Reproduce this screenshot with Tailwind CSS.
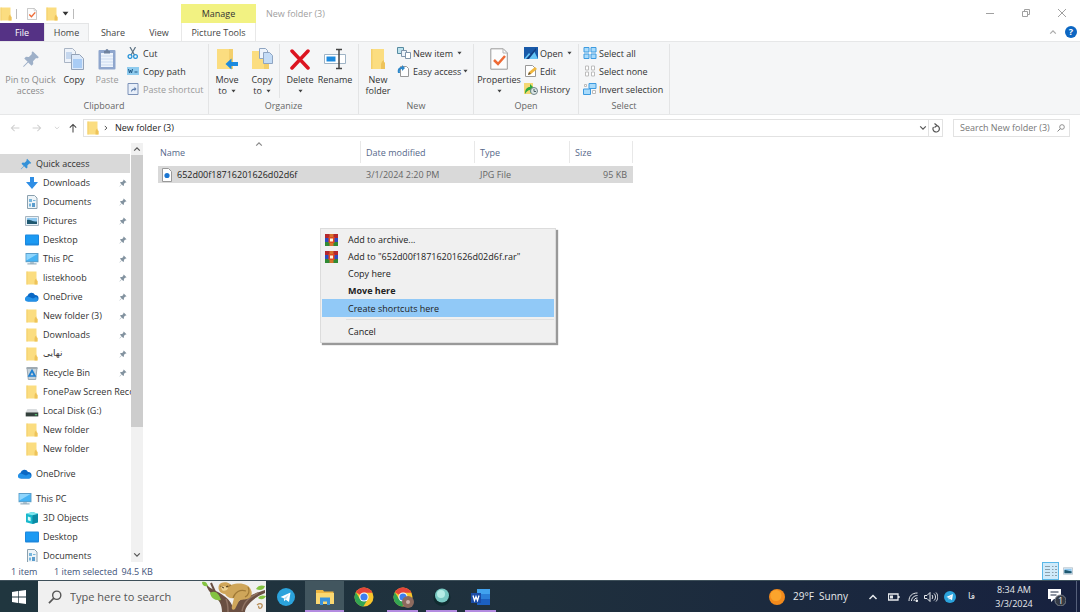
<!DOCTYPE html>
<html lang="en">
<head>
  <meta charset="UTF-8" />
  <meta name="viewport" content="width=device-width, initial-scale=1.0" />
  <title>New folder (3)</title>
  <script src="https://cdn.jsdelivr.net/npm/@tailwindcss/browser@4"></script>
</head>
<body class="relative h-screen flex flex-col overflow-hidden bg-white font-['Open_Sans','Noto_Sans',sans-serif] text-[9px] leading-[11px] text-[#333]">

  <!-- Shared icons -->
  <svg class="hidden">
    <symbol id="folder" viewBox="0 0 12 14"><path d="M.5.500h10v8.500l1 1v3.500H.5z" fill="#fbdd80"/><path d="M9 8.500 10.500 7.500v1.500l1 1v3.500H8.500v-3z" fill="#eec35a"/><path d="M.5.500h1v13h-1z" fill="#f3cf6c"/></symbol>
    <symbol id="pin" viewBox="0 0 16 16"><path d="M9.500 1 15 6.500l-1.500 1-1-.3-2.700 2.700.2 2.600-1.500 1.500-3-3L1.500 15 1 14.500 5 10.500l-3-3L3.500 6l2.600.2L8.800 3.500l-.3-1z"/></symbol>
    <symbol id="download" viewBox="0 0 12 12"><path d="M4 0h4v5h4L6 12 0 5h4z" fill="#2f8ee5"/></symbol>
    <symbol id="document" viewBox="0 0 12 14"><path d="M1.500.5h7l2.500 2.500v10.500h-9.500z" fill="#eef4f8" stroke="#8aa0ae"/><path d="M3 4h3v3H3zM7 5h2.500v1H7zM3 8.500h2v3H3z" fill="#78b6dc"/><path d="M6 8h3v4H6z" fill="#5a9ccc"/></symbol>
    <symbol id="picture" viewBox="0 0 14 10"><path d="M.5.5h13v9H.5z" fill="#e6f1f9" stroke="#a6b5c0"/><path d="M2 2h10v6H2z" fill="#8ec8f0"/><path d="M2 4c3-1 4 1.500 10 1.500V8H2z" fill="#1f5870"/></symbol>
    <symbol id="desktop" viewBox="0 0 14 11"><rect width="14" height="11" rx="1" fill="#1c87dd"/><path d="M1 1h12v8H1z" fill="#1b9af3"/></symbol>
    <symbol id="pc" viewBox="0 0 14 13"><path d="M0 0h14v10H0z" fill="#5f9dc5"/><path d="M1 1h12v8H1z" fill="#46b3f4"/><path d="M1 1h12L1 8z" fill="#8fd5fc"/><path d="M5 10h4v1h3v1.500H2V11h3z" fill="#9bb3c2"/></symbol>
    <symbol id="cloud" viewBox="0 0 14 9"><path d="M3 9a3 3 0 0 1-.5-5.800A4 4 0 0 1 10 2.500 3.300 3.300 0 0 1 11 9z" fill="#0a68c4"/><path d="M2 9a2.500 2.500 0 0 1 1-5l5 2 3-1.500A2.400 2.400 0 0 1 11.500 9z" fill="#2391e8"/></symbol>
    <symbol id="bin" viewBox="0 0 12 14"><path d="M1 2h10l-1.300 11.500H2.300z" fill="#c6d2da" stroke="#8b9aa5" stroke-width=".8"/><path d="M.5 1h11v2H.5z" fill="#9faab2"/><path d="M6 4.500 9 10H3z" fill="none" stroke="#1e7fd0" stroke-width="1.700"/></symbol>
    <symbol id="disk" viewBox="0 0 12 7"><path d="M2 0h8l1.500 3H.5z" fill="#d9dcde"/><path d="M.5 3h11v3.500H.5z" fill="#33403c"/><path d="M8.500 4.500h2v1h-2z" fill="#5fd07a"/></symbol>
    <symbol id="cube" viewBox="0 0 13 13"><path d="M0 2 7 0l6 2v9l-6 2-7-2z" fill="#18b8cc"/><path d="M7 3.500 13 2v9l-6 2z" fill="#0b8ba5"/><path d="M0 2l7 1.500L13 2 7 0z" fill="#7ee6ee"/><path d="M2 5l3 1v4l-3-1z" fill="#d6fbfc"/></symbol>
    <symbol id="rar" viewBox="0 0 13 12"><path d="M0 0h13v4H0z" fill="#b3272d"/><path d="M0 4h13v4H0z" fill="#2c4cc0"/><path d="M0 8h13v4H0z" fill="#2f8a34"/><path d="M4.500 0h4v12h-4z" fill="#d8722c"/><path d="M3.500 3h6v6h-6z" fill="#e04a22"/><path d="M5 4.500h3v3H5z" fill="#fff8dc"/></symbol>
    <symbol id="down" viewBox="0 0 6 4"><path d="M.5.5h5L3 3.700z"/></symbol>
    <symbol id="chevron" viewBox="0 0 10 6"><path d="m1.500 1 3.500 3.500L8.500 1" fill="none" stroke="currentColor" stroke-width="1.500"/></symbol>
    <symbol id="mag" viewBox="0 0 12 12"><circle cx="7.500" cy="4.500" r="3.500" fill="none" stroke="currentColor" stroke-width="1.200"/><path d="M5 7 .8 11.200" stroke="currentColor" stroke-width="1.400"/></symbol>
    <symbol id="arrow" viewBox="0 0 12 10"><path d="M11.500 5h-10M5.500 1l-4 4 4 4" fill="none" stroke="currentColor" stroke-width="1.300"/></symbol>
    <symbol id="check" viewBox="0 0 18 22"><path d="M.8.8h12.500l4 4v16.400H.8z" fill="#fdfdfd" stroke="#9a9a9a"/><path d="M13 1v4h4" fill="none" stroke="#b4b4b4"/><path d="m4 12 4 4 7-8" fill="none" stroke="#ee6a35" stroke-width="2.500"/></symbol>
    <symbol id="telegram" viewBox="0 0 18 18"><circle cx="9" cy="9" r="9" fill="#2ba3dc"/><path d="m3.500 9 10-4.500-1.500 9.500-3.300-2.300-1.500 1.600-.4-3z" fill="#fff"/><path d="m6.800 10.300 5-3.800-3.100 5.200" fill="#b9dff2"/></symbol>
    <symbol id="chrome" viewBox="0 0 20 20"><circle cx="10" cy="10" r="9.500" fill="#f9c52b"/><path d="M10 10 1.800 5.200A9.500 9.500 0 0 1 18.500 5.700H10z" fill="#e5453a"/><path d="M1.800 5.200A9.500 9.500 0 0 0 9.300 19.500l4.400-7.300L6 12z" fill="#33a553"/><circle cx="10" cy="10" r="4.600" fill="#fff"/><circle cx="10" cy="10" r="3.600" fill="#3f7fee"/></symbol>
  </svg>

  <!-- Title bar -->
  <header class="shrink-0">
    <div class="flex h-[23px] items-stretch">
      <div class="flex w-[181px] items-center gap-2 pt-1">
        <svg class="w-3 h-3.5"><use href="#folder"/></svg>
        <span class="-ml-1 mr-px w-px h-2.5 bg-[#bbb]"></span>
        <button aria-label="Properties"><svg class="w-3 h-3 block"><use href="#check"/></svg></button>
        <button aria-label="New folder"><svg class="w-3 h-3.5 block"><use href="#folder"/></svg></button>
        <button aria-label="Customize toolbar" class="-ml-1 flex items-center gap-1"><svg class="w-[7px] h-[5px] fill-[#333]"><use href="#down"/></svg><span class="w-px h-2.5 bg-[#bbb]"></span></button>
      </div>
      <div class="mt-1 w-[75px] bg-[#f2f282] flex items-center justify-center">Manage</div>
      <h1 class="flex items-center pt-1 pl-2.5 text-[#a0a0a0]">New folder (3)</h1>
      <div class="ml-auto flex items-center pt-0.5 text-[#a0a0a0]">
        <button aria-label="Minimize" class="w-9 flex justify-center"><svg class="w-2 h-2" viewBox="0 0 8 8"><path d="M0 4.500h8" stroke="currentColor"/></svg></button>
        <button aria-label="Restore" class="w-9 flex justify-center"><svg class="w-2.5 h-2.5" viewBox="0 0 10 10" fill="none" stroke="currentColor"><path d="M1.500 3.500h5v5h-5zM3.500 3.500v-2h5v5h-2"/></svg></button>
        <button aria-label="Close" class="w-9 flex justify-center"><svg class="w-2.5 h-2.5" viewBox="0 0 10 10"><path d="m1 1 8 8M9 1 1 9" stroke="currentColor"/></svg></button>
      </div>
    </div>
    <nav class="flex h-[18px] text-[#444]">
      <button class="w-11 bg-[#553285] text-white">File</button>
      <button class="w-[45px] bg-[#f5f6f7] border-x border-t border-[#e4e5e6]">Home</button>
      <button class="w-12">Share</button>
      <button class="w-11">View</button>
      <button class="w-[75px] border-x border-[#e8e8e8]">Picture Tools</button>
      <div class="ml-auto flex items-center gap-2 pr-[3px] text-[#aaa]">
        <button aria-label="Collapse ribbon"><svg class="w-2 h-1.5 block rotate-180"><use href="#chevron"/></svg></button>
        <button aria-label="Help" class="size-3 rounded-full bg-[#0c66c2] text-white font-bold leading-3">?</button>
      </div>
    </nav>
  </header>

  <!-- Ribbon -->
  <div class="flex h-[74px] shrink-0 bg-[#f5f6f7] border-y border-[#e6e7e8] pt-0.5">
    <section class="w-[209px] flex flex-col border-r border-[#e3e4e5]">
      <div class="flex flex-1">
        <button class="w-[61px] flex flex-col items-center pt-1 text-[#8a8a8a]"><svg class="w-[18px] h-[22px] mb-1 fill-[#9eb0c8]"><use href="#pin"/></svg><span class="whitespace-nowrap">Pin to Quick<br>access</span></button>
        <button class="w-[26px] flex flex-col items-center pt-1"><svg class="w-5 h-[22px] mb-1" viewBox="0 0 20 22"><path d="M.5.500h8l3 3v11H.5z" fill="#eef3fa" stroke="#a9b4c4"/><path d="M2 4h6v7H2z" fill="#c5d7ee"/><path d="M7.500 6.500h8l4 4v11h-12z" fill="#dce9fa" stroke="#94a3b8"/><path d="M9 11h9v9H9z" fill="#a9ccf5"/></svg>Copy</button>
        <button class="w-[40px] flex flex-col items-center pt-1 text-[#999]"><svg class="w-[18px] h-[22px] mb-1" viewBox="0 0 18 22"><rect x=".5" y="2" width="17" height="19.500" rx="1" fill="#8fa6cd"/><path d="M3 5h12v14H3z" fill="#eef4fc"/><path d="M3 8h12M3 11h12M3 14h12M3 17h12" stroke="#cbdaf0"/><path d="M6 3h1.500a1.500 2 0 0 1 3 0H12v2.500H6z" fill="#6f829f"/></svg>Paste</button>
        <div class="flex-1">
          <button class="flex items-center gap-1 h-[18px]"><svg class="w-3 h-3" viewBox="0 0 12 12"><path d="m3 0 4.500 8M8.500 0 4 8" stroke="#5b7183" stroke-width="1.200"/><circle cx="3" cy="9.500" r="1.900" fill="none" stroke="#2894d8" stroke-width="1.300"/><circle cx="8.500" cy="9.500" r="1.900" fill="none" stroke="#2894d8" stroke-width="1.300"/></svg>Cut</button>
          <button class="flex items-center gap-1 h-[18px]"><svg class="w-3 h-2" viewBox="0 0 12 8"><path d="M0 0h12v8H0z" fill="#8fcbee"/><path d="m1.500 2 1 4 1-3 1 3 1-4M7.500 5h3" fill="none" stroke="#215b88"/></svg>Copy path</button>
          <button class="flex items-center gap-1 h-[18px] text-[#999] whitespace-nowrap"><svg class="w-3 h-3" viewBox="0 0 12 12"><path d="M1 .5h10v11H1z" fill="#e8eff9" stroke="#7c92b8"/><path d="M4 9.500c0-3 1-4 3.500-4V3.800L9.500 6l-2 2.300V7C6 7 5 7.500 4 9.500z" fill="#5d7cab"/></svg>Paste shortcut</button>
        </div>
      </div>
      <h2 class="h-4 text-center text-[#666] leading-4">Clipboard</h2>
    </section>

    <section class="w-[150px] flex flex-col border-r border-[#e3e4e5]">
      <div class="flex flex-1">
        <button class="w-9 flex flex-col items-center pt-1"><svg class="w-[22px] h-[22px] mb-1" viewBox="0 0 22 22"><path d="M1 1h16v20H1z" fill="#fbdd80"/><path d="M13 1h4v20h-4z" fill="#f3cf6c"/><path d="m9.500 16 6-5.500v3.500H22v4h-6.500v3.500z" fill="#1c8ade"/></svg>Move<span class="flex items-center gap-1">to <svg class="w-[5px] h-1 fill-[#444]"><use href="#down"/></svg></span></button>
        <button class="w-[35px] flex flex-col items-center pt-1 border-r border-[#e3e4e5]"><svg class="w-[22px] h-[22px] mb-1" viewBox="0 0 22 22"><path d="M1 3h16v18H1z" fill="#fbdd80"/><path d="M13 12h5v9h-5z" fill="#f3cf6c"/><path d="M8.500.5h6l2 2v8h-8z" fill="#eef4fb" stroke="#8fa5c2"/><path d="M12.500 4.500h6l3 3v8h-9z" fill="#c4dcf6" stroke="#8fa5c2"/></svg>Copy<span class="flex items-center gap-1">to <svg class="w-[5px] h-1 fill-[#444]"><use href="#down"/></svg></span></button>
        <button class="w-10 flex flex-col items-center pt-1"><svg class="w-5 h-[22px] mb-1" viewBox="0 0 20 22"><path d="m2 3 16 17M18 3 2 20" stroke="#dc1420" stroke-width="3.500" stroke-linecap="round"/></svg>Delete<svg class="w-[5px] h-1 mt-1 fill-[#444]"><use href="#down"/></svg></button>
        <button class="w-[30px] flex flex-col items-center pt-1"><svg class="w-[22px] h-[22px] mb-1" viewBox="0 0 22 22"><path d="M.5 6.500h21v9H.5z" fill="#fff" stroke="#9fb4c6"/><path d="M2.500 8.500h9v5h-9z" fill="#1c8ade"/><path d="M12 1.500h6M12 20.500h6M15 1.500v19" stroke="#444" stroke-width="1.500"/></svg>Rename</button>
      </div>
      <h2 class="h-4 text-center text-[#666] leading-4">Organize</h2>
    </section>

    <section class="w-[115px] flex flex-col border-r border-[#e3e4e5]">
      <div class="flex flex-1">
        <button class="w-[38px] flex flex-col items-center pt-1"><svg class="w-4 h-[22px] mb-1" viewBox="0 0 16 22"><path d="M1 1h13v13l1 1v6H1z" fill="#fbdd80"/><path d="M12 13.500 14 12v2l1 1v6h-4v-5z" fill="#eec35a"/><path d="M1 1h1.500v20H1z" fill="#f3cf6c"/></svg><span>New<br>folder</span></button>
        <div class="flex-1 whitespace-nowrap">
          <button class="flex items-center gap-0.5 h-[18px]"><svg class="w-3.5 h-3" viewBox="0 0 14 12"><path d="M.5.5h6v6h-6z" fill="#bfe3ee" stroke="#578ba0"/><path d="M4.500 3.500h5v6h-5z" fill="#eef4fb" stroke="#8095aa"/><path d="M8.500 5.500h5v6h-5z" fill="#fff" stroke="#8095aa"/></svg>New item <svg class="w-[5px] h-1 ml-0.5 fill-[#444]"><use href="#down"/></svg></button>
          <button class="flex items-center gap-0.5 h-[18px]"><svg class="w-3.5 h-3" viewBox="0 0 14 12"><path d="M3.500 1.500h6l2 2v8h-8z" fill="#fff" stroke="#999"/><path d="M1 8c-1-4 1-6 4-6V0l3 3-3 3V4C3 4 2.500 5.500 3 8z" fill="#2d87c9"/></svg>Easy access <svg class="w-[5px] h-1 fill-[#444]"><use href="#down"/></svg></button>
        </div>
      </div>
      <h2 class="h-4 text-center text-[#666] leading-4">New</h2>
    </section>

    <section class="w-[105px] flex flex-col border-r border-[#e3e4e5]">
      <div class="flex flex-1">
        <button class="w-[50px] flex flex-col items-center pt-1"><svg class="w-[18px] h-[22px] mb-1"><use href="#check"/></svg>Properties<svg class="w-[5px] h-1 mt-1 fill-[#444]"><use href="#down"/></svg></button>
        <div class="flex-1 whitespace-nowrap">
          <button class="flex items-center gap-0.5 h-[18px]"><svg class="w-3.5 h-3" viewBox="0 0 14 12"><path d="M0 0h14v12H0z" fill="#1859a8"/><path d="m0 12 5-6 2 2 3-4 4 8z" fill="#64c3f5"/><path d="M2 12 12 1v2L5 12z" fill="#123f83"/></svg>Open <svg class="w-[5px] h-1 ml-0.5 fill-[#444]"><use href="#down"/></svg></button>
          <button class="flex items-center gap-0.5 h-[18px]"><svg class="w-3.5 h-3" viewBox="0 0 14 12"><path d="M1.500.5h7l3 3v8h-10z" fill="#fff" stroke="#999"/><path d="m4 10 1-3 6-5 2 2-6 5z" fill="#f0b73e"/><path d="m4 10 1-3 2 2z" fill="#64533a"/></svg>Edit</button>
          <button class="flex items-center gap-0.5 h-[18px]"><svg class="w-3.5 h-3" viewBox="0 0 14 12"><path d="M0 0h9v11H0z" fill="#f4d873"/><path d="M1 11c0-5 2-7 5-7V1l5 5-5 4V7c-2 0-3 1-5 4z" fill="#2ea93c"/><circle cx="10" cy="8" r="3.500" fill="#dce6e6" stroke="#72868a"/><path d="M10 6v2.500h2" fill="none" stroke="#4b5f63"/></svg>History</button>
        </div>
      </div>
      <h2 class="h-4 text-center text-[#666] leading-4">Open</h2>
    </section>

    <section class="w-[91px] flex flex-col border-r border-[#e3e4e5]">
      <div class="flex-1 pl-1 whitespace-nowrap">
        <button class="flex items-center gap-0.5 h-[18px]"><svg class="w-3.5 h-3" viewBox="0 0 14 12" fill="#a9dbfb" stroke="#3d9be0"><path d="M1 .5h5v4.500H1zM8 .5h5v4.500H8zM1 7h5v4.500H1zM8 7h5v4.500H8z"/></svg>Select all</button>
        <button class="flex items-center gap-0.5 h-[18px]"><svg class="w-3.5 h-3" viewBox="0 0 14 12" fill="#fff" stroke="#bcbcbc"><path d="M2.500 1h3v4h-3zM8.500 1h3v4h-3zM2.500 7h3v4h-3zM8.500 7h3v4h-3z"/></svg>Select none</button>
        <button class="flex items-center gap-0.5 h-[18px]"><svg class="w-3.5 h-3" viewBox="0 0 14 12" fill="#a9dbfb" stroke="#3d9be0"><path d="M6 .5h7v5H6zM.5 6h7v5.500h-7z"/><path d="M9.500 7.500h3v3h-3zM1.500 1.500h2v2h-2z" fill="#fff" stroke="#bbb"/></svg>Invert selection</button>
      </div>
      <h2 class="h-4 text-center text-[#666] leading-4">Select</h2>
    </section>
  </div>

  <!-- Address bar -->
  <div class="flex shrink-0 items-center pt-[3px] pr-2.5 h-[22px]">
    <div class="w-[83px] flex items-center gap-3 pl-2.5 text-[#d0d0d0]">
      <button aria-label="Back"><svg class="w-2.5 h-2 block"><use href="#arrow"/></svg></button>
      <button aria-label="Forward"><svg class="w-2.5 h-2 block rotate-180"><use href="#arrow"/></svg></button>
      <button aria-label="Recent locations"><svg class="w-1.5 h-1 block"><use href="#chevron"/></svg></button>
      <button aria-label="Up" class="-ml-1 text-[#444]"><svg class="w-2.5 h-2 block rotate-90"><use href="#arrow"/></svg></button>
    </div>
    <div class="flex flex-1 h-[18px] items-center border border-[#e2e2e2] pl-[3px]">
      <svg class="w-3 h-3.5"><use href="#folder"/></svg>
      <svg class="w-1.5 h-1 mx-1 -rotate-90 text-[#444]"><use href="#chevron"/></svg>
      <span class="pl-0.5 text-[#222]">New folder (3)</span>
      <button aria-label="Previous locations" class="ml-auto pr-px text-[#555]"><svg class="w-2 h-1.5 block"><use href="#chevron"/></svg></button>
      <button aria-label="Refresh" class="w-[14px] h-full flex items-center justify-center border-l border-[#e2e2e2]"><svg class="w-2 h-2.5" viewBox="0 0 8 10" fill="none" stroke="#555" stroke-width="1.200"><path d="M5 2.700A3.200 3.200 0 1 1 1.500 4M2.500.5l2.500 2-2.500 2"/></svg></button>
    </div>
    <label class="ml-2.5 flex w-[117px] h-[18px] items-center border border-[#e2e2e2] pl-1.5 pr-1 text-[#777]">
      <input type="text" aria-label="Search New folder (3)" placeholder="Search New folder (3)" class="min-w-0 flex-1 outline-none placeholder:text-[#777]">
      <svg class="w-2 h-2 shrink-0"><use href="#mag"/></svg>
    </label>
  </div>

  <!-- Folder tree and file list -->
  <div class="flex flex-1 min-h-0">
    <aside class="flex w-[143px] shrink-0">
      <ul class="w-[131px] pt-[17px] overflow-hidden whitespace-nowrap *:flex *:h-[19px] *:items-center">
        <li class="pl-5 gap-1 bg-[#d9d9d9] mr-px"><svg class="w-3 h-3 fill-[#3592d8]"><use href="#pin"/></svg>Quick access</li>
        <li class="pl-[25px] gap-1"><svg class="w-3.5 h-3"><use href="#download"/></svg>Downloads<svg class="ml-auto mr-1 size-2 fill-[#8393a0]"><use href="#pin"/></svg></li>
        <li class="pl-[25px] gap-1"><svg class="w-3.5 h-3.5"><use href="#document"/></svg>Documents<svg class="ml-auto mr-1 size-2 fill-[#8393a0]"><use href="#pin"/></svg></li>
        <li class="pl-[25px] gap-1"><svg class="w-3.5 h-3"><use href="#picture"/></svg>Pictures<svg class="ml-auto mr-1 size-2 fill-[#8393a0]"><use href="#pin"/></svg></li>
        <li class="pl-[25px] gap-1"><svg class="w-3.5 h-3"><use href="#desktop"/></svg>Desktop<svg class="ml-auto mr-1 size-2 fill-[#8393a0]"><use href="#pin"/></svg></li>
        <li class="pl-[25px] gap-1"><svg class="w-3.5 h-3"><use href="#pc"/></svg>This PC<svg class="ml-auto mr-1 size-2 fill-[#8393a0]"><use href="#pin"/></svg></li>
        <li class="pl-[25px] gap-1"><svg class="w-3.5 h-3.5"><use href="#folder"/></svg>listekhoob<svg class="ml-auto mr-1 size-2 fill-[#8393a0]"><use href="#pin"/></svg></li>
        <li class="pl-[25px] gap-1"><svg class="w-3.5 h-3"><use href="#cloud"/></svg>OneDrive<svg class="ml-auto mr-1 size-2 fill-[#8393a0]"><use href="#pin"/></svg></li>
        <li class="pl-[25px] gap-1"><svg class="w-3.5 h-3.5"><use href="#folder"/></svg>New folder (3)<svg class="ml-auto mr-1 size-2 fill-[#8393a0]"><use href="#pin"/></svg></li>
        <li class="pl-[25px] gap-1"><svg class="w-3.5 h-3.5"><use href="#folder"/></svg>Downloads<svg class="ml-auto mr-1 size-2 fill-[#8393a0]"><use href="#pin"/></svg></li>
        <li class="pl-[25px] gap-1"><svg class="w-3.5 h-3.5"><use href="#folder"/></svg><span lang="fa" class="font-['DejaVu_Sans',sans-serif]">نهایی</span><svg class="ml-auto mr-1 size-2 fill-[#8393a0]"><use href="#pin"/></svg></li>
        <li class="pl-[25px] gap-1"><svg class="w-3.5 h-3.5"><use href="#bin"/></svg>Recycle Bin<svg class="ml-auto mr-1 size-2 fill-[#8393a0]"><use href="#pin"/></svg></li>
        <li class="pl-[25px] gap-1"><svg class="w-3.5 h-3.5 shrink-0"><use href="#folder"/></svg>FonePaw Screen Recorder</li>
        <li class="pl-[25px] gap-1"><svg class="w-3.5 h-2 mt-1"><use href="#disk"/></svg>Local Disk (G:)</li>
        <li class="pl-[25px] gap-1"><svg class="w-3.5 h-3.5"><use href="#folder"/></svg>New folder</li>
        <li class="pl-[25px] gap-1"><svg class="w-3.5 h-3.5"><use href="#folder"/></svg>New folder</li>
        <li class="pl-[18px] gap-1 mt-1.5"><svg class="w-3.5 h-3"><use href="#cloud"/></svg>OneDrive</li>
        <li class="pl-[18px] gap-1 mt-1.5"><svg class="w-3.5 h-3"><use href="#pc"/></svg>This PC</li>
        <li class="pl-[25px] gap-1"><svg class="w-3.5 h-3"><use href="#cube"/></svg>3D Objects</li>
        <li class="pl-[25px] gap-1"><svg class="w-3.5 h-3"><use href="#desktop"/></svg>Desktop</li>
        <li class="pl-[25px] gap-1"><svg class="w-3.5 h-3.5"><use href="#document"/></svg>Documents</li>
      </ul>
      <div class="mt-1.5 w-3 flex flex-col items-center bg-[#f1f1f1] text-[#555]">
        <svg class="w-2 h-1.5 my-[3px] rotate-180 shrink-0"><use href="#chevron"/></svg>
        <div class="w-full h-[65%] bg-[#cdcdcd]"></div>
        <svg class="w-2 h-1.5 mt-auto mb-1 shrink-0"><use href="#chevron"/></svg>
      </div>
    </aside>

    <main class="flex-1 pt-1 pl-[15px]">
      <table class="table-fixed w-[475px] border-separate border-spacing-0 whitespace-nowrap text-left">
        <colgroup><col class="w-[203px]"><col class="w-[114px]"><col class="w-[95px]"><col></colgroup>
        <thead class="text-[#56688a] *:*:h-[22px] *:*:font-normal *:*:border-r *:*:border-[#e8e8e8]">
          <tr>
            <th class="pl-0.5"><div class="flex items-center">Name<svg class="w-2 h-1.5 ml-[70px] mb-4 rotate-180 text-[#888]"><use href="#chevron"/></svg></div></th>
            <th class="pl-[5px]">Date modified</th>
            <th class="pl-[5px]">Type</th>
            <th class="pl-[5px]">Size</th>
          </tr>
        </thead>
        <tbody>
          <tr class="h-[3px]"><td></td></tr>
          <tr class="*:h-[17px] *:bg-[#d9d9d9] text-[#666]">
            <td class="pl-[3px] text-[#222]"><div class="flex items-center gap-1"><svg class="w-3 h-3.5" viewBox="0 0 12 14"><path d="M1.500.5h6L10.500 3.500v10h-9z" fill="#fff" stroke="#999"/><circle cx="6" cy="7.500" r="2.600" fill="#1b76d2"/></svg>652d00f18716201626d02d6f</div></td>
            <td class="pl-[5px]">3/1/2024 2:20 PM</td>
            <td class="pl-[5px]">JPG File</td>
            <td class="pr-1.5 text-right">95 KB</td>
          </tr>
        </tbody>
      </table>
    </main>
  </div>

  <!-- Status bar -->
  <footer class="flex h-[18px] shrink-0 items-center bg-white text-[#41537a]">
    <span class="pl-[11px] w-[54px]">1 item</span>
    <span class="pr-1">1 item selected</span>
    <span>94.5 KB</span>
    <div class="ml-auto flex items-center gap-1 pr-1.5">
      <button aria-label="Details view" class="w-[17px] h-[18px] border border-[#5bb8e8] bg-[#cfeafa] flex items-center justify-center"><svg class="w-3 h-3" viewBox="0 0 12 12"><path d="M0 1.500h5M0 4.500h5M0 7.500h5M0 10.500h5M7 1.500h1.500M7 4.500h1.500M7 7.500h1.500M7 10.500h1.500M10 1.500h2M10 4.500h2M10 7.500h2M10 10.500h2" stroke="#8ba0ac"/></svg></button>
      <button aria-label="Large thumbnails" class="pr-px"><svg class="w-2.5 h-2 block"><use href="#picture"/></svg></button>
    </div>
  </footer>

  <!-- Taskbar -->
  <div class="flex h-8 shrink-0 bg-linear-to-r from-[#20363f] via-[#1f303d] to-[#17213f] text-white border-t border-[#3e505a]">
    <button aria-label="Start" class="w-[38px] flex items-center justify-center"><svg class="w-3.5 h-3.5" viewBox="0 0 14 14" fill="#fff"><path d="m0 2 6-.9v5.500H0zM6.700 1 14 0v6.600H6.700zM0 7.400h6V13l-6-.9zM6.700 7.400H14V14l-7.300-1z"/></svg></button>
    <div class="flex w-[228px] items-center bg-[#f0f0f0] text-[#555]">
      <svg class="w-3.5 h-3.5 ml-2.5 shrink-0"><use href="#mag"/></svg>
      <input type="text" aria-label="Type here to search" placeholder="Type here to search" class="ml-2 min-w-0 flex-1 text-[11px] outline-none placeholder:text-[#555]">
      <svg class="w-[64px] h-[31px] shrink-0" viewBox="0 0 64 31">
        <path d="M4 3c5 6 12 7 18 12 5 3 7 7 9 11 4-6 10-9 16-11 7-3 10-4 16-6v3c-7 3-12 6-16 11-3 3-4 6-4 8H20c0-8-3-12-8-16C8 12 5 8 4 3z" fill="#6a4f42"/>
        <path d="M9 2l4 9" stroke="#6a4f42" stroke-width="2"/>
        <path d="M24 18c2 4 2 8 2 13M56 12c-8 4-14 8-16 18" fill="none" stroke="#8f7263" stroke-width="1.500"/>
        <!-- sleeping animal -->
        <path d="M17 4c1-3 8-4 11-1l1 1c9-3 18-1 20 5 2 4 0 8-4 9-3 1-6 0-8 2l-4 8c-2 2-4 0-3-3l2-8c-4 1-7-1-9-4-4 0-8-4-6-9z" fill="#cfa65a"/>
        <path d="M18 5c3 2 7 2 11-1M31 17c2-6 7-9 13-7M46 6c2 4 1 8-3 10" fill="none" stroke="#a07936" stroke-width="1.200"/>
        <path d="M19 6c2-2 5-1 7 1 0 2-4 4-6 2z" fill="#ecd192"/>
        <path d="m20 6 2 1M24 6l2-1" stroke="#4b351a"/>
        <!-- leaves -->
        <path d="M0 1c3-1 5 0 6 4-4 1-6-1-6-4zM8 12c5-3 9 0 11 7-6 1-10-2-11-7zM54 8c2-4 6-4 9-3-1 4-5 5-9 3zM56 17c2-3 5-3 8-2-2 4-5 4-8 2z" fill="#84c341"/>
        <path d="M55 24c4-3 7 0 4 3-2 1-3-1-2-2" fill="none" stroke="#b78c55" stroke-width="1.300"/>
      </svg>
    </div>
    <div class="flex *:w-[39px] *:flex *:items-center *:justify-center">
      <button aria-label="Telegram"><svg class="w-[18px] h-[18px]"><use href="#telegram"/></svg></button>
      <button aria-label="File Explorer" class="relative bg-[#42565f]"><svg class="w-[18px] h-4" viewBox="0 0 18 16"><path d="M0 1h7l1 1.500h9.500V15H0z" fill="#eeb642"/><path d="M0 4h18v11H0z" fill="#fbd872"/><path d="M4 8.500h10V16h-3v-3.500H7V16H4z" fill="#3a92dc"/></svg><span class="absolute bottom-0 inset-x-0 h-0.5 bg-[#b38be0]"></span></button>
      <button aria-label="Chrome"><svg class="w-5 h-5"><use href="#chrome"/></svg></button>
      <button aria-label="Chrome profile" class="relative"><svg class="w-5 h-5"><use href="#chrome"/></svg><svg class="absolute right-2 bottom-1 w-3 h-3" viewBox="0 0 12 12"><circle cx="6" cy="6" r="6" fill="#8d6a5e"/><circle cx="6" cy="6" r="2" fill="#c9b3aa"/></svg><span class="absolute bottom-0 inset-x-1 h-0.5 bg-[#b38be0]"></span></button>
      <button aria-label="Screen recorder" class="relative"><svg class="w-[18px] h-[18px]" viewBox="0 0 18 18"><circle cx="9" cy="9.500" r="8.500" fill="#0f2a2f"/><circle cx="9" cy="7.500" r="7" fill="#79c9c3"/><circle cx="8" cy="6" r="4" fill="#b5ece5"/></svg><span class="absolute bottom-0 inset-x-1 h-0.5 bg-[#b38be0]"></span></button>
      <button aria-label="Word" class="relative"><svg class="w-5 h-[18px]" viewBox="0 0 20 18"><path d="M6 1h13v16H6z" fill="#1b5fc0"/><path d="M6 1h13v5H6z" fill="#41a2ee"/><path d="M6 6h13v5H6z" fill="#2b7fd8"/><path d="M0 5h10v10H0z" fill="#1a4ba6"/><path d="m2 7.500 1.500 5L5 8.500l1.500 4 1.500-5" fill="none" stroke="#fff" stroke-width="1.300"/></svg><span class="absolute bottom-0 inset-x-1 h-0.5 bg-[#b38be0]"></span></button>
    </div>
    <div class="ml-auto flex items-center text-[#e6e9ec]">
      <button class="flex items-center gap-2 text-[10px]"><svg class="w-4 h-4" viewBox="0 0 16 16"><circle cx="8" cy="8" r="8" fill="#f28a1c"/><circle cx="7" cy="6.500" r="5.500" fill="#fba42c"/></svg><span>29°F&nbsp; Sunny</span></button>
      <button aria-label="Show hidden icons" class="ml-5"><svg class="w-2.5 h-1.5 block rotate-180"><use href="#chevron"/></svg></button>
      <svg class="w-3 h-2 ml-2.5" viewBox="0 0 12 8"><path d="M.5 1h9.500v6H.5zM11 3v2" fill="none" stroke="currentColor" stroke-width="1.300"/><path d="M2 2.500h3v3H2z" fill="currentColor"/></svg>
      <svg class="w-2.5 h-2.5 ml-2" viewBox="0 0 10 10" fill="none" stroke="currentColor"><path d="M1 9C1 4 4 1 9.500 1M3.500 9C3.500 6 6 3.500 9.500 3.500M6 9c0-2 1.500-3 3.500-3"/><path d="M8 8h1.500v1.500H8z" fill="currentColor"/></svg>
      <svg class="w-3.5 h-2.5 ml-1.5" viewBox="0 0 14 10" fill="none" stroke="currentColor"><path d="M.5 3.500H3l3-3v9l-3-3H.5zM8 3c1 1 1 3 0 4M10 1.500c2 2 2 5 0 7M12 .5c2.500 3 2.500 6 0 9"/></svg>
      <svg class="w-3 h-3 ml-1.5"><use href="#telegram"/></svg>
      <span lang="fa" class="ml-3 w-3 font-['DejaVu_Sans',sans-serif]">فا</span>
      <time class="w-11 ml-3 text-center leading-[14px]">8:34 AM<br>3/3/2024</time>
      <button aria-label="Notifications" class="relative ml-3 mr-2.5"><svg class="w-[18px] h-[18px] block" viewBox="0 0 18 18"><path d="M0 1h13v10H6l-3 3v-3H0z" fill="#fff"/><path d="M2.500 4h8M2.500 7h6" stroke="#1b2840"/><circle cx="12.500" cy="12.500" r="5.500" fill="#343a44" stroke="#7c828c"/></svg><span class="absolute right-0.5 bottom-0 w-[7px] text-center">1</span></button>
      <span class="w-px h-full bg-[#55607a] mr-[3px]"></span>
    </div>
  </div>

  <!-- Drag and drop menu -->
  <div role="menu" class="absolute left-[320px] top-[228px] w-[236px] border border-[#dcdcdc] bg-[#f0f0f0] px-px py-0.5 shadow-[2px_2px_1px_#999] text-[#222] *:flex *:w-full *:items-center">
    <button role="menuitem" class="h-[17px] pl-[3px] gap-2.5"><svg class="w-[13px] h-3"><use href="#rar"/></svg>Add to archive...</button>
    <button role="menuitem" class="h-[17px] pl-[3px] gap-2.5"><svg class="w-[13px] h-3"><use href="#rar"/></svg>Add to "652d00f18716201626d02d6f.rar"</button>
    <button role="menuitem" class="h-[17px] pl-[26px]">Copy here</button>
    <button role="menuitem" class="h-[17px] pl-[26px] font-bold">Move here</button>
    <button role="menuitem" class="h-[18px] pl-[26px] bg-[#91c9f7]">Create shortcuts here</button>
    <div role="separator" class="h-[5px]"><span class="ml-6 w-full h-px bg-[#e0e0e0]"></span></div>
    <button role="menuitem" class="h-[18px] pl-[26px]">Cancel</button>
  </div>
</body>
</html>
